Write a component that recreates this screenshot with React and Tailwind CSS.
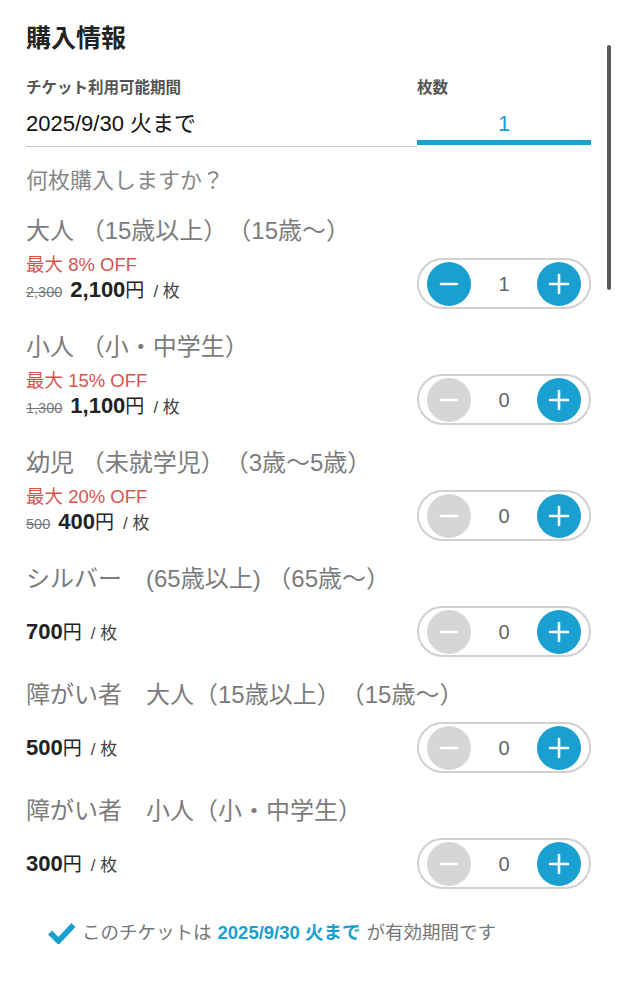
import React from "react";

const font = { fontFamily: '"Liberation Sans", "Noto Sans CJK JP", sans-serif' };

const tickets = [
  { name: "大人 （15歳以上）（15歳〜）", off: "最大 8% OFF", was: "2,300", price: "2,100", qty: 1 },
  { name: "小人 （小・中学生）", off: "最大 15% OFF", was: "1,300", price: "1,100", qty: 0 },
  { name: "幼児 （未就学児）（3歳〜5歳）", off: "最大 20% OFF", was: "500", price: "400", qty: 0 },
  { name: "シルバー　(65歳以上) （65歳〜）", price: "700", qty: 0 },
  { name: "障がい者　大人（15歳以上）（15歳〜）", price: "500", qty: 0 },
  { name: "障がい者　小人（小・中学生）", price: "300", qty: 0 },
];

function Stepper({ qty }) {
  return (
    <div className="flex h-[51px] w-[174px] shrink-0 items-center justify-between rounded-full border-2 border-[#d0d0d0] px-[8px]">
      <button
        className={`flex h-[44px] w-[44px] items-center justify-center rounded-full ${qty > 0 ? "bg-[#1a9fd1]" : "bg-[#d6d6d6]"}`}
      >
        <svg width="22" height="22" viewBox="0 0 22 22">
          <path d="M3 11h16" stroke="white" strokeWidth="2.6" strokeLinecap="round" />
        </svg>
      </button>
      <span className="text-[20px] text-[#666]">{qty}</span>
      <button className="flex h-[44px] w-[44px] items-center justify-center rounded-full bg-[#1a9fd1]">
        <svg width="24" height="24" viewBox="0 0 24 24">
          <path d="M3 12h18M12 3v18" stroke="white" strokeWidth="2.6" strokeLinecap="round" />
        </svg>
      </button>
    </div>
  );
}

function TicketRow({ t }) {
  return (
    <div className="pb-[23px]">
      <div className="h-[30px] text-[24px] leading-[30px] text-[#7c7c7c] whitespace-nowrap">{t.name}</div>
      <div className={`mt-[12px] flex justify-between ${t.off ? "items-start" : "items-center"}`}>
        <div className={`flex flex-col ${t.off ? "-mt-[3px]" : ""}`}>
          {t.off && <div className="text-[18.5px] leading-[20px] text-[#d9534f]">{t.off}</div>}
          <div className="flex h-[30px] items-baseline text-[#222] leading-[30px]">
            {t.was && <span className="mr-[8px] text-[14.5px] text-[#777] line-through">{t.was}</span>}
            <span className="text-[22px] font-bold">{t.price}</span>
            <span className="text-[19px]">円</span>
            <span className="ml-[9px] text-[17px] text-[#444]">/ 枚</span>
          </div>
        </div>
        <Stepper qty={t.qty} />
      </div>
    </div>
  );
}

export default function App() {
  return (
    <div className="relative min-h-[999px] w-full bg-white px-[26px] pt-[23px] [text-spacing-trim:space-all]" style={font}>
      <div className="absolute right-[6px] top-[45px] h-[245px] w-[4px] rounded-full bg-[#5a5a5a]" />
      <h1 className="text-[25px] font-bold leading-[30px] text-[#222]">購入情報</h1>

      <div className="mt-[25px] flex items-start">
        <div className="flex w-[391px] flex-col border-b border-[#c8c8c8]">
          <div className="text-[15.5px] font-semibold leading-[20px] text-[#555]">チケット利用可能期間</div>
          <div className="mt-[11px] h-[30px] text-[22px] leading-[30px] text-[#111]">2025/9/30 火まで</div>
          <div className="h-[7px]" />
        </div>
        <div className="flex w-[174px] flex-col border-b-[5px] border-[#1a9fd1]">
          <div className="text-[15.5px] font-semibold leading-[20px] text-[#555]">枚数</div>
          <div className="mt-[11px] h-[30px] text-center text-[22px] leading-[30px] text-[#1a9fd1]">1</div>
          <div className="h-[1px]" />
        </div>
      </div>

      <div className="mt-[20px] text-[22px] leading-[28px] text-[#888]">何枚購入しますか？</div>

      <div className="mt-[21px]">
        {tickets.map((t) => (
          <TicketRow key={t.name} t={t} />
        ))}
      </div>

      <div className="mt-[10px] flex h-[22px] items-center pl-[21px] text-[18.5px] text-[#777]">
        <svg width="29" height="22" viewBox="0 0 29 22" className="mr-[6px]">
          <path d="M3 10.5l8.5 8.5L26.5 3" fill="none" stroke="#1a9fd1" strokeWidth="5.5" />
        </svg>
        <span>このチケットは</span>
        <span className="mx-[6px] font-bold text-[#1a9fd1]">2025/9/30 火まで</span>
        <span>が有効期間です</span>
      </div>
    </div>
  );
}
